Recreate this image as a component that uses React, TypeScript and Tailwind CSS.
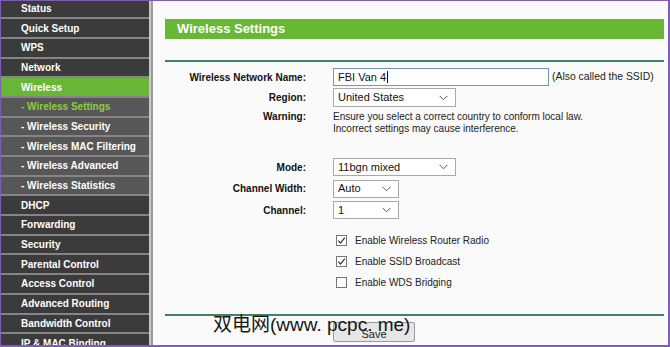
import React from "react";

const menu: { label: string; kind: "top" | "sub"; active?: boolean }[] = [
  { label: "Status", kind: "top" },
  { label: "Quick Setup", kind: "top" },
  { label: "WPS", kind: "top" },
  { label: "Network", kind: "top" },
  { label: "Wireless", kind: "top", active: true },
  { label: "- Wireless Settings", kind: "sub", active: true },
  { label: "- Wireless Security", kind: "sub" },
  { label: "- Wireless MAC Filtering", kind: "sub" },
  { label: "- Wireless Advanced", kind: "sub" },
  { label: "- Wireless Statistics", kind: "sub" },
  { label: "DHCP", kind: "top" },
  { label: "Forwarding", kind: "top" },
  { label: "Security", kind: "top" },
  { label: "Parental Control", kind: "top" },
  { label: "Access Control", kind: "top" },
  { label: "Advanced Routing", kind: "top" },
  { label: "Bandwidth Control", kind: "top" },
  { label: "IP & MAC Binding", kind: "top" },
];

function Chevron() {
  return (
    <svg width="9" height="6" viewBox="0 0 9 6" className="shrink-0">
      <polyline points="0.5,0.8 4.5,4.8 8.5,0.8" fill="none" stroke="#555" strokeWidth="1" />
    </svg>
  );
}

function Select({ value, w, h = 18 }: { value: string; w: string; h?: number }) {
  return (
    <div
      className={`${w} flex items-center justify-between border border-[#a9a9a9] bg-white pl-[4px] pr-[7px] text-[11px] text-[#111]`}
      style={{ height: h }}
    >
      <span>{value}</span>
      <Chevron />
    </div>
  );
}

function Check({ checked, label }: { checked: boolean; label: string }) {
  return (
    <div className="flex h-[21px] items-center pl-[3px]">
      <div className="flex h-[11px] w-[11px] items-center justify-center border border-[#767676] bg-white">
        {checked && (
          <svg width="9" height="9" viewBox="0 0 9 9">
            <polyline points="1.2,4.6 3.5,7 7.8,1.6" fill="none" stroke="#333" strokeWidth="1.2" />
          </svg>
        )}
      </div>
      <span className="ml-[8px] text-[10px] text-[#222]">{label}</span>
    </div>
  );
}

function Label({ children }: { children: React.ReactNode }) {
  return <div className="w-[141px] shrink-0 text-right text-[10px] font-bold text-[#111]">{children}</div>;
}

export default function App() {
  return (
    <div
      className="relative flex h-[347px] w-[670px] overflow-hidden bg-[#fafafa]"
      style={{ fontFamily: '"Liberation Sans", Arial, sans-serif' }}
    >
      {/* Sidebar */}
      <div className="flex w-[149px] shrink-0 flex-col bg-[#3a3a3a] -mt-[0.5px]">
        {menu.map((m) => {
          const bg = m.active && m.kind === "top" ? "bg-[#67b635]" : m.kind === "sub" ? "bg-[#575757]" : "bg-[#3b3b3b]";
          const color = m.kind === "sub" && m.active ? "text-[#8ccf3f]" : "text-white";
          return (
            <div
              key={m.label}
              className={`flex h-[19.7px] shrink-0 items-center border-b-2 border-[#858585] pl-[21px] text-[10px] font-bold ${bg} ${color}`}
            >
              {m.label}
            </div>
          );
        })}
      </div>
      <div className="w-[2px] shrink-0 bg-[#c9c9c9]" />
      <div className="w-[2px] shrink-0 bg-[#9a9a9a]" />

      {/* Main */}
      <div className="flex flex-1 flex-col pl-[12px] pr-[6px] pt-[19px]">
        <div className="flex h-[20px] items-center bg-[#67b835] pl-[12px] text-[13px] font-bold text-white">
          Wireless Settings
        </div>
        <div className="mt-[21px] h-[2px] bg-[#3d8460]" />

        <div className="mt-[6px] flex h-[18px] items-center">
          <Label>Wireless Network Name:</Label>
          <div className="ml-[27px] flex h-[18px] w-[216px] items-center border border-[#7393c4] bg-white pl-[4px] text-[11px] text-[#111]">
            FBI Van 4<span className="ml-[1px] inline-block h-[12px] w-px bg-[#111]" />
          </div>
          <span className="ml-[3px] text-[10.4px] text-[#222]">(Also called the SSID)</span>
        </div>

        <div className="mt-[2px] flex h-[19px] items-center">
          <Label>Region:</Label>
          <div className="ml-[27px]">
            <Select value="United States" w="w-[123px]" h={19} />
          </div>
        </div>

        <div className="mt-[3.5px] flex items-start">
          <div className="w-[141px] shrink-0 text-right text-[10px] font-bold leading-[12px] text-[#111]">Warning:</div>
          <div className="ml-[27px] text-[10px] leading-[12px] text-[#222]">
            <div>Ensure you select a correct country to conform local law.</div>
            <div>Incorrect settings may cause interference.</div>
          </div>
        </div>

        <div className="mt-[23.5px] flex flex-col gap-[3.5px]">
          <div className="flex h-[18px] items-center">
            <Label>Mode:</Label>
            <div className="ml-[27px]">
              <Select value="11bgn mixed" w="w-[123px]" />
            </div>
          </div>
          <div className="flex h-[18px] items-center">
            <Label>Channel Width:</Label>
            <div className="ml-[27px]">
              <Select value="Auto" w="w-[66px]" />
            </div>
          </div>
          <div className="flex h-[18px] items-center">
            <Label>Channel:</Label>
            <div className="ml-[27px]">
              <Select value="1" w="w-[66px]" />
            </div>
          </div>
        </div>

        <div className="ml-[168px] mt-[10.5px] flex flex-col">
          <Check checked label="Enable Wireless Router Radio" />
          <Check checked label="Enable SSID Broadcast" />
          <Check checked={false} label="Enable WDS Bridging" />
        </div>

        <div className="mt-[21px] h-[2px] shrink-0 bg-[#3d8460]" />

        <div className="ml-[168px] mt-[6px] flex h-[20px] w-[82px] shrink-0 items-center justify-center rounded-[2px] border border-[#9a9a9a] bg-[#e6e6e6] pt-[6px] text-[11px] text-[#222]">
          Save
        </div>
      </div>

      {/* watermark */}
      <div
        className="pointer-events-none absolute left-[213px] top-[314px] z-10 whitespace-nowrap text-[19px] leading-[21px] text-[#151515]"
        style={{ fontFamily: '"Liberation Sans", "Noto Sans CJK SC", sans-serif' }}
      >
        双电网(www. pcpc. me)
      </div>

      {/* frame */}
      <div className="pointer-events-none absolute inset-0 z-20 border-b-2 border-l border-r-2 border-t border-[#7e5db8]" />
    </div>
  );
}
